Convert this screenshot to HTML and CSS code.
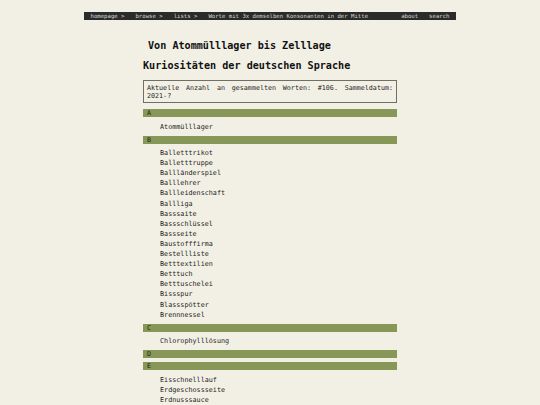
FILE: index.html
```html
<!DOCTYPE html>
<html lang="de">
<head>
<meta charset="utf-8">
<title>Von Atommülllager bis Zelllage</title>
<link rel="stylesheet" href="styles.css">
</head>
<body>
<nav class="topnav">
  <a class="nav-item" href="#">homepage &gt;</a>
  <a class="nav-item" href="#">browse &gt;</a>
  <a class="nav-item" href="#">lists &gt;</a>
  <span class="nav-item nav-title">Worte mit 3x demselben Konsonanten in der Mitte</span>
  <a class="nav-item" href="#">about</a>
  <a class="nav-item" href="#">search</a>
</nav>
<main class="content">
  <h1 class="title">Von Atommülllager bis Zelllage</h1>
  <h2 class="subtitle">Kuriositäten der deutschen Sprache</h2>
  <div class="info">Aktuelle Anzahl an gesammelten Worten: #106. Sammeldatum: 2021-?</div>

  <section class="letter">
    <div class="bar">A</div>
    <ul class="words"><li>Atommülllager</li></ul>
  </section>
  <section class="letter">
    <div class="bar">B</div>
    <ul class="words">
      <li>Balletttrikot</li>
      <li>Balletttruppe</li>
      <li>Ballländerspiel</li>
      <li>Balllehrer</li>
      <li>Ballleidenschaft</li>
      <li>Ballliga</li>
      <li>Basssaite</li>
      <li>Bassschlüssel</li>
      <li>Bassseite</li>
      <li>Baustofffirma</li>
      <li>Bestellliste</li>
      <li>Betttextilien</li>
      <li>Betttuch</li>
      <li>Betttuschelei</li>
      <li>Bissspur</li>
      <li>Blassspötter</li>
      <li>Brennnessel</li>
    </ul>
  </section>
  <section class="letter">
    <div class="bar">C</div>
    <ul class="words"><li>Chlorophylllösung</li></ul>
  </section>
  <section class="letter">
    <div class="bar">D</div>
  </section>
  <section class="letter">
    <div class="bar">E</div>
    <ul class="words">
      <li>Eisschnelllauf</li>
      <li>Erdgeschossseite</li>
      <li>Erdnusssauce</li>
    </ul>
  </section>
</main>
</body>
</html>
```
FILE: styles.css
```css
html, body {
  margin: 0;
  padding: 0;
  background: #f2f0e5;
  font-family: "DejaVu Sans Mono", "Liberation Mono", monospace;
  color: #1e1e1e;
}

.topnav {
  display: flex;
  align-items: center;
  width: 372px;
  height: 8px;
  margin: 12px auto 0;
  padding: 0 1px;
  box-sizing: border-box;
  background: #2b2b2b;
  font-size: 5.65px;
  line-height: 8px;
}

.nav-item {
  color: #d8d8d8;
  text-decoration: none;
  padding: 0 5.5px;
  white-space: pre;
}

.nav-title {
  flex: 1;
}

.content {
  width: 254px;
  margin: 0 auto;
}

.title {
  margin: 20px 0 0 5px;
  font-size: 10.15px;
  line-height: 12px;
  font-weight: bold;
  color: #111;
}

.subtitle {
  margin: 8px 0 0;
  font-size: 10.15px;
  line-height: 12px;
  font-weight: bold;
  color: #111;
}

.info {
  margin-top: 8px;
  border: 1px solid #6f6f6a;
  padding: 3px 3px 2px;
  font-size: 6.7px;
  line-height: 8px;
  text-align: justify;
  color: #1e1e1e;
}

.letter {
  margin-bottom: 4px;
}

.info + .letter {
  margin-top: 6px;
}

.bar {
  height: 8px;
  background: #879757;
  padding-left: 4px;
  font-size: 6.7px;
  line-height: 8px;
  color: #1e1e1e;
}

.words {
  list-style: none;
  margin: 0;
  padding: 4.5px 0 0 17px;
  font-size: 6.75px;
  line-height: 10.1px;
}
```
